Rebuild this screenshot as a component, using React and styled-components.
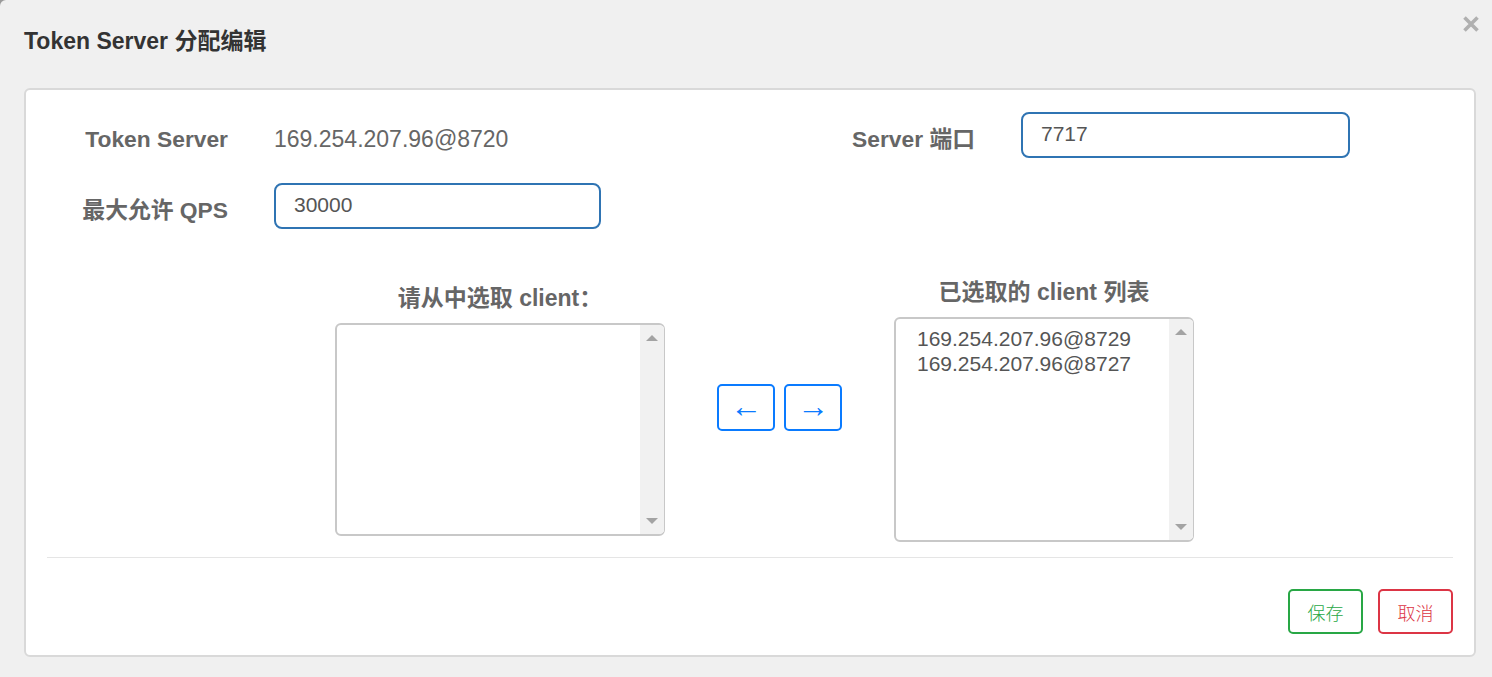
import React from "react";
import styled, { createGlobalStyle } from "styled-components";

const Global = createGlobalStyle`
  html, body { margin: 0; padding: 0; background: #9a9a9a; }
  body { font-family: "Liberation Sans", "Noto Sans CJK SC", Arial, sans-serif; }
  * { box-sizing: border-box; }
`;

const Dialog = styled.div`
  width: 1492px;
  height: 677px;
  background: #f0f0f0;
  border-radius: 6px 0 0 0;
  position: relative;
  padding: 0 16px 20px 24px;
  display: flex;
  flex-direction: column;
`;

const Header = styled.div`
  height: 88px;
  display: flex;
  align-items: center;
  padding-bottom: 6px;
`;

const Title = styled.h4`
  margin: 0;
  font-size: 23px;
  font-weight: bold;
  color: #333;
  line-height: 1;
`;

const Close = styled.button`
  position: absolute;
  top: 12px;
  right: 10px;
  width: 22px;
  height: 24px;
  border: none;
  background: transparent;
  padding: 0;
  cursor: pointer;
  display: flex;
  align-items: center;
  justify-content: center;
`;

const Panel = styled.div`
  width: 1452px;
  height: 569px;
  background: #fff;
  border: 2px solid #d9d9d9;
  border-radius: 6px;
  padding: 22px 21px 0 0;
  display: flex;
  flex-direction: column;
`;

const FormGrid = styled.div`
  display: grid;
  grid-template-columns: 202px 327px 328px 329px;
  column-gap: 46px;
  row-gap: 25px;
  grid-auto-rows: 46px;
  align-items: start;
`;

const Label = styled.label`
  text-align: right;
  font-size: 22.8px;
  font-weight: bold;
  color: #666;
  white-space: nowrap;
  line-height: 46px;
  height: 46px;
  padding-top: 4px;
`;

const Value = styled.div`
  font-size: 23px;
  color: #666;
  white-space: nowrap;
  line-height: 46px;
  height: 46px;
  padding-top: 4px;
`;

const Input = styled.div`
  height: 46px;
  border: 2px solid #2f74b3;
  border-radius: 8px;
  padding: 0 18px 3px;
  display: flex;
  align-items: center;
  font-size: 21px;
  color: #555;
`;

const Transfer = styled.div`
  display: flex;
  align-items: center;
  margin-top: 50px;
  padding-left: 309px;
`;

const Column = styled.div`
  display: flex;
  flex-direction: column;
  align-items: center;
  width: ${(p) => p.$w}px;
`;

const ColTitle = styled.div`
  font-size: 23px;
  font-weight: bold;
  color: #666;
  white-space: nowrap;
  line-height: 26px;
  margin-bottom: 12px;
`;

const ListBox = styled.div`
  width: 100%;
  height: ${(p) => p.$h}px;
  border: 2px solid #c8c8c8;
  border-right-width: 1px;
  border-radius: 6px;
  display: flex;
  overflow: hidden;
  background: #fff;
`;

const Options = styled.div`
  flex: 1;
  padding: 7px 0 0 21px;
  font-size: 21px;
  color: #555;
  line-height: 25px;
`;

const Scrollbar = styled.div`
  width: 24px;
  background: #f1f1f1;
  display: flex;
  flex-direction: column;
  justify-content: space-between;
  align-items: center;
  padding: 10px 0 10px;
`;

const Arrow = styled.div`
  width: 0;
  height: 0;
  border-left: 6px solid transparent;
  border-right: 6px solid transparent;
  ${(p) => p.$down
    ? "border-top: 6px solid #a3a3a3;"
    : "border-bottom: 6px solid #a3a3a3;"}
`;

const MoveButtons = styled.div`
  display: flex;
  gap: 9px;
  margin: 0 52px;
  padding-bottom: 6px;
`;

const MoveButton = styled.button`
  width: 58px;
  height: 47px;
  border: 2px solid #0a7bff;
  border-radius: 5px;
  background: #fff;
  color: #0a7bff;
  font-size: 32px;
  line-height: 1;
  font-family: "Liberation Sans", sans-serif;
  padding: 0 0 4px;
  display: flex;
  align-items: center;
  justify-content: center;
`;

const Divider = styled.hr`
  margin: 15px 0 0 21px;
  border: none;
  border-top: 1px solid #e5e5e5;
  height: 0;
`;

const Footer = styled.div`
  display: flex;
  justify-content: flex-end;
  gap: 15px;
  margin-top: 31px;
`;

const FooterButton = styled.button`
  width: 75px;
  height: 45px;
  border: 2px solid ${(p) => p.$color};
  color: ${(p) => p.$color};
  background: #fff;
  border-radius: 5px;
  font-size: 18px;
  font-family: "Noto Sans CJK SC", sans-serif;
  font-weight: 300;
  padding: 0;
`;

export default function App() {
  return (
    <>
      <Global />
      <Dialog>
        <Header>
          <Title>Token Server 分配编辑</Title>
        </Header>
        <Close aria-label="close">
          <svg width="18" height="18" viewBox="0 0 18 18">
            <path d="M2.5 2.5 L15.5 15.5 M15.5 2.5 L2.5 15.5" stroke="#b0b0b0" strokeWidth="3.6" strokeLinecap="butt" />
          </svg>
        </Close>
        <Panel>
          <FormGrid>
            <Label>Token Server</Label>
            <Value>169.254.207.96@8720</Value>
            <Label>Server 端口</Label>
            <Input>7717</Input>
            <Label>最大允许 QPS</Label>
            <Input>30000</Input>
          </FormGrid>
          <Transfer>
            <Column $w={330}>
              <ColTitle>请从中选取 client：</ColTitle>
              <ListBox $h={213}>
                <Options />
                <Scrollbar>
                  <Arrow />
                  <Arrow $down />
                </Scrollbar>
              </ListBox>
            </Column>
            <MoveButtons>
              <MoveButton>←</MoveButton>
              <MoveButton>→</MoveButton>
            </MoveButtons>
            <Column $w={300}>
              <ColTitle>已选取的 client 列表</ColTitle>
              <ListBox $h={225}>
                <Options>
                  <div>169.254.207.96@8729</div>
                  <div>169.254.207.96@8727</div>
                </Options>
                <Scrollbar>
                  <Arrow />
                  <Arrow $down />
                </Scrollbar>
              </ListBox>
            </Column>
          </Transfer>
          <Divider />
          <Footer>
            <FooterButton $color="#28a745">保存</FooterButton>
            <FooterButton $color="#dc3545">取消</FooterButton>
          </Footer>
        </Panel>
      </Dialog>
    </>
  );
}
